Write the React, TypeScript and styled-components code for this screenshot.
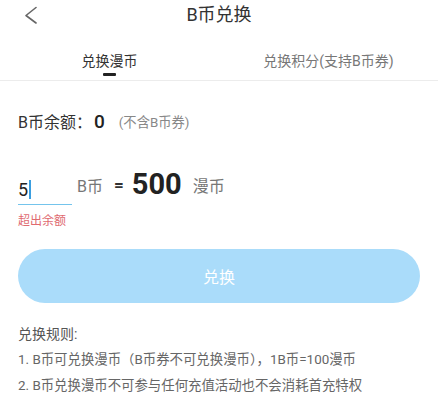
import React from "react";
import styled, { createGlobalStyle } from "styled-components";

const Global = createGlobalStyle`
  html, body { margin: 0; padding: 0; background: #fff; }
  body { font-family: Roboto, "Noto Sans CJK SC", sans-serif; color: #333; }
  * { box-sizing: border-box; }
`;

const Page = styled.div`
  width: 438px;
  height: 400px;
  background: #fff;
  overflow: hidden;
  display: flex;
  flex-direction: column;
`;

const Header = styled.div`
  height: 30px;
  display: grid;
  grid-template-columns: 1fr auto 1fr;
  align-items: center;
`;

const BackBtn = styled.div`
  padding-left: 24px;
  display: flex;
  align-items: center;
  height: 30px;
`;

const Title = styled.div`
  font-size: 18px;
  line-height: 30px;
  color: #333;
`;

const Tabs = styled.div`
  height: 51px;
  display: flex;
  border-bottom: 1px solid #ececec;
`;

const Tab = styled.div`
  flex: 1;
  display: flex;
  flex-direction: column;
  align-items: center;
  padding-top: 21px;
`;

const TabText = styled.div<{ $active?: boolean }>`
  font-size: 14px;
  line-height: 20px;
  color: ${(p) => (p.$active ? "#333" : "#777")};
`;

const Indicator = styled.div<{ $active?: boolean }>`
  margin-top: 2px;
  width: 13px;
  height: 3px;
  border-radius: 1px;
  background: ${(p) => (p.$active ? "#222" : "transparent")};
`;

const Body = styled.div`
  padding: 0 18px 0 18px;
  display: flex;
  flex-direction: column;
`;

const BalanceRow = styled.div`
  margin-top: 26px;
  height: 28px;
  display: flex;
  align-items: center;
`;

const BalanceLabel = styled.span`
  font-size: 16px;
  color: #333;
`;

const BalanceValue = styled.span`
  font-size: 19px;
  font-weight: 500;
  color: #222;
  margin-left: 2px;
`;

const BalanceNote = styled.span`
  font-size: 13.3px;
  color: #888;
  margin-left: 14px;
`;

const ExchangeRow = styled.div`
  margin-top: 36px;
  height: 34px;
  display: flex;
  align-items: center;
`;

const InputBox = styled.div`
  width: 54px;
  height: 34px;
  border-bottom: 1.5px solid #74c4ec;
  display: flex;
  align-items: center;
  padding-top: 4px;
  font-size: 18px;
  color: #222;
`;

const Caret = styled.span`
  display: inline-block;
  width: 1.5px;
  height: 19px;
  background: #3a9ee0;
  margin-left: 1px;
`;

const Unit = styled.span<{ $gap: number }>`
  font-size: 16px;
  color: #777;
  margin-left: ${(p) => p.$gap}px;
  margin-top: -6px;
`;

const Equals = styled.span`
  font-size: 17px;
  font-weight: 700;
  color: #333;
  margin-left: 11px;
  margin-top: -6px;
`;

const Amount = styled.span`
  font-size: 29px;
  font-weight: 700;
  color: #222;
  margin-left: 8px;
  margin-top: -8px;
`;

const ErrorText = styled.div`
  margin-top: 8px;
  font-size: 12px;
  line-height: 16px;
  color: #e06a70;
`;

const SubmitButton = styled.button`
  margin-top: 20px;
  width: 402px;
  height: 54px;
  border: none;
  border-radius: 27px;
  background: #aadcfa;
  color: #fff;
  font-family: Roboto, "Noto Sans CJK SC", sans-serif;
  font-size: 16px;
  display: flex;
  align-items: center;
  justify-content: center;
  padding: 0;
`;

const RulesTitle = styled.div`
  margin-top: 21px;
  font-size: 14px;
  line-height: 20px;
  color: #555;
`;

const RuleLine = styled.div`
  font-size: 13.4px;
  line-height: 26px;
  color: #666;
  white-space: nowrap;
`;

const RuleList = styled.div`
  margin-top: 3px;
`;

export default function App() {
  return (
    <Page>
      <Global />
      <Header>
        <BackBtn>
          <svg width="14" height="18" viewBox="0 0 14 18">
            <path d="M12 1.5 L2 9.5 L12 17" fill="none" stroke="#666" strokeWidth="1.6" strokeLinecap="round" strokeLinejoin="round" />
          </svg>
        </BackBtn>
        <Title>B币兑换</Title>
        <div />
      </Header>
      <Tabs>
        <Tab>
          <TabText $active>兑换漫币</TabText>
          <Indicator $active />
        </Tab>
        <Tab>
          <TabText>兑换积分(支持B币券)</TabText>
          <Indicator />
        </Tab>
      </Tabs>
      <Body>
        <BalanceRow>
          <BalanceLabel>B币余额：</BalanceLabel>
          <BalanceValue>0</BalanceValue>
          <BalanceNote>(不含B币券)</BalanceNote>
        </BalanceRow>
        <ExchangeRow>
          <InputBox>
            5<Caret />
          </InputBox>
          <Unit $gap={5}>B币</Unit>
          <Equals>=</Equals>
          <Amount>500</Amount>
          <Unit $gap={11}>漫币</Unit>
        </ExchangeRow>
        <ErrorText>超出余额</ErrorText>
        <SubmitButton>兑换</SubmitButton>
        <RulesTitle>兑换规则:</RulesTitle>
        <RuleList>
          <RuleLine>1. B币可兑换漫币（B币券不可兑换漫币），1B币=100漫币</RuleLine>
          <RuleLine>2. B币兑换漫币不可参与任何充值活动也不会消耗首充特权</RuleLine>
        </RuleList>
      </Body>
    </Page>
  );
}
